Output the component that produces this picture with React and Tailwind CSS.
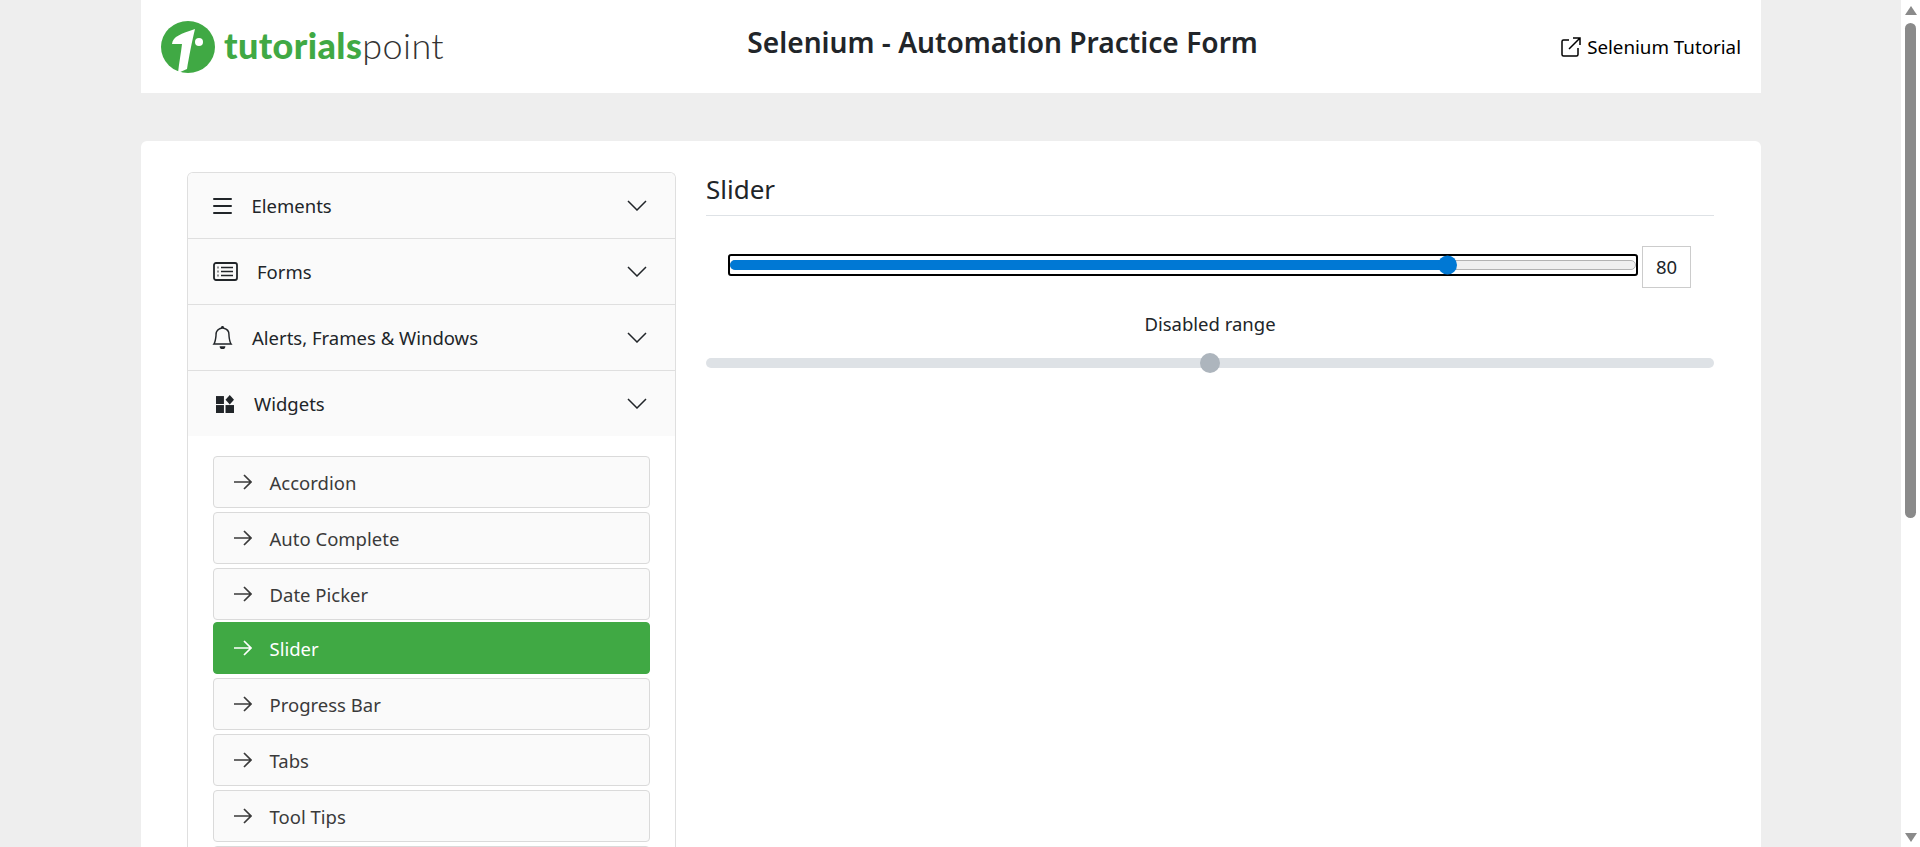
import React from "react";

const font = "font-['Noto_Sans','Open_Sans',sans-serif]";

function Logo() {
  return (
    <div className="flex items-center gap-[9px]">
      <svg width="54" height="52" viewBox="0 0 54 52" className="shrink-0">
        <ellipse cx="27" cy="26" rx="27" ry="26" fill="#40a944" />
        <path d="M11 23 C12 15 20 13 34 8 C31 20 28 36 26 48 C23 49 20 51 17 52 C18 42 20 32 21 23 Z" fill="#fff" />
        <circle cx="38" cy="21" r="4" fill="#fff" />
      </svg>
      <div className="flex items-baseline text-[36px] leading-none tracking-[0.4px] font-['Lato',sans-serif] mb-[4px]">
        <span className="font-black text-[#40a944]">tutorials</span>
        <span className="font-light text-[#333]">point</span>
      </div>
    </div>
  );
}

function MenuIcon() {
  return (
    <svg width="19" height="18" viewBox="0 0 19 18" fill="none" stroke="currentColor" strokeWidth="2" strokeLinecap="round" className="shrink-0">
      <path d="M1 2H18M1 9H18M1 16H18" />
    </svg>
  );
}

function ListIcon() {
  return (
    <svg width="25" height="19" viewBox="0 0 25 19" fill="none" stroke="currentColor" className="shrink-0">
      <rect x="1" y="1" width="23" height="17" rx="2" strokeWidth="1.8" />
      <path d="M8 5.500H20M8 9.500H20M8 13.500H20" strokeWidth="1.600" />
      <path d="M4.500 5.500H5.500M4.500 9.500H5.500M4.500 13.500H5.500" strokeWidth="1.800" />
    </svg>
  );
}

function BellIcon() {
  return (
    <svg width="23" height="23" viewBox="0 0 16 16" fill="currentColor" className="shrink-0 -ml-[2px]">
      <path d="M8 16a2 2 0 0 0 2-2H6a2 2 0 0 0 2 2zM8 1.918l-.797.161A4.002 4.002 0 0 0 4 6c0 .628-.134 2.197-.459 3.742-.16.767-.376 1.566-.663 2.258h10.244c-.287-.692-.502-1.49-.663-2.258C12.134 8.197 12 6.628 12 6a4.002 4.002 0 0 0-3.203-3.92L8 1.917zM14.22 12c.223.447.481.801.78 1H1c.299-.199.557-.553.78-1C2.68 10.2 3 6.88 3 6c0-2.42 1.720-4.440 4.005-4.901a1 1 0 1 1 1.990 0A5.002 5.002 0 0 1 13 6c0 .88.32 4.200 1.220 6z" />
    </svg>
  );
}

function WidgetsIcon() {
  return (
    <svg width="18" height="18" viewBox="0 0 17 17" fill="currentColor" className="shrink-0 ml-[3px]">
      <rect x="0" y="1" width="7.500" height="7.500" />
      <path d="M13 0 L17 4.500 L13 9 L9 4.500 Z" />
      <rect x="0" y="9.500" width="7.500" height="7.500" />
      <rect x="9" y="9.500" width="8" height="7.500" />
    </svg>
  );
}

function Chevron() {
  return (
    <svg width="20" height="11" viewBox="0 0 20 11" fill="none" stroke="currentColor" strokeWidth="1.500" className="shrink-0 text-[#212529]">
      <path d="M1 1L10 10L19 1" />
    </svg>
  );
}

function Arrow() {
  return (
    <svg width="18" height="16" viewBox="0 0 18 16" fill="none" stroke="currentColor" strokeWidth="1.700" className="shrink-0">
      <path d="M0 8H17M10 1L17 8L10 15" />
    </svg>
  );
}

function AccHeader({ icon, label, textLeft, last }) {
  return (
    <div className={`shrink-0 flex items-center pl-[25px] pr-[28px] bg-[#fafafa] text-[#212529] ${last ? "h-[65px]" : "h-[66px] border-b border-[#dfdfdf]"}`}>
      <span className="w-[20px] shrink-0 flex items-center overflow-visible">{icon}</span>
      <span className={`${textLeft} text-[18.5px] flex-1 pt-[1px]`}>{label}</span>
      <Chevron />
    </div>
  );
}

function Item({ label, active }) {
  return (
    <div
      className={`h-[52px] shrink-0 flex items-center pl-[20px] rounded-[4px] border text-[18.5px] ${
        active
          ? "bg-[#40a944] border-[#40a944] text-white -mt-[2px]"
          : "bg-[#fafafa] border-[#dadada] text-[#3a3a3a]"
      }`}
    >
      {label ? <Arrow /> : null}
      {label ? <span className="ml-[17.5px] pt-[1px]">{label}</span> : null}
    </div>
  );
}

export default function App() {
  return (
    <div className={`h-[847px] w-full overflow-hidden flex bg-[#eeeeee] text-[#212529] ${font}`}>
      <div className="flex-1 min-w-0 pl-[141px] pr-[140px] flex flex-col h-[847px] overflow-hidden">
        <header className="h-[93px] shrink-0 bg-white flex items-center pl-[20px] pr-[20px] justify-between">
          <div className="w-[300px]"><Logo /></div>
          <h1 className="text-[28.15px] font-semibold leading-none -mt-[9px] -ml-[17px]">Selenium - Automation Practice Form</h1>
          <div className="flex items-center gap-[6px] text-[18.75px] text-black mt-[1px]">
            <svg width="20" height="20" viewBox="0 0 20 20" fill="none" stroke="currentColor" strokeWidth="1.500" className="shrink-0">
              <path d="M8 3H2.500A1.500 1.500 0 0 0 1 4.500v13A1.500 1.500 0 0 0 2.500 19h13a1.500 1.500 0 0 0 1.500-1.500V11" />
              <path d="M8 12L19 1M12 1H19V8" />
            </svg>
            <span>Selenium Tutorial</span>
          </div>
        </header>
        <main className="mt-[48px] flex-1 bg-white rounded-t-[6px] flex pl-[46px] pr-[47px] pt-[31px] gap-[30px] min-h-0">
          <aside className="w-[489px] shrink-0 border border-b-0 border-[#dfdfdf] rounded-t-[6px] flex flex-col overflow-hidden">
            <AccHeader icon={<MenuIcon />} label="Elements" textLeft="ml-[18.5px]" />
            <AccHeader icon={<ListIcon />} label="Forms" textLeft="ml-[24px]" />
            <AccHeader icon={<BellIcon />} label="Alerts, Frames & Windows" textLeft="ml-[19px]" />
            <AccHeader icon={<WidgetsIcon />} label="Widgets" textLeft="ml-[21px]" last />
            <div className="pt-[20px] px-[25px] flex flex-col gap-[4px]">
              <Item label="Accordion" />
              <Item label="Auto Complete" />
              <Item label="Date Picker" />
              <Item label="Slider" active />
              <Item label="Progress Bar" />
              <Item label="Tabs" />
              <Item label="Tool Tips" />
              <Item />
            </div>
          </aside>
          <section className="flex-1 min-w-0">
            <h2 className="h-[45px] text-[26px] leading-[36px] border-b border-[#dee2e6] -mt-[1px]">Slider</h2>
            <div className="mt-[30px] flex items-center pl-[22px] pr-[23px] gap-[4px]">
              <div className="flex-1 h-[22px] mb-[4px] border-2 border-black rounded-[3px] flex items-center">
                <div className="relative flex-1 h-[10px] rounded-full bg-[#efefef] border border-[#b2b2b2]">
                  <div className="absolute -left-px -top-px -bottom-px w-[79.2%] rounded-full bg-[#0078d4]" />
                  <div className="absolute left-[78.2%] top-1/2 -translate-y-1/2 w-[19px] h-[19px] rounded-full bg-[#0078d4]" />
                </div>
              </div>
              <div className="w-[49px] h-[42px] border border-[#cccccc] flex items-center justify-center text-[18.5px]">80</div>
            </div>
            <div className="mt-[22px] text-center text-[18.5px] leading-[27px]">Disabled range</div>
            <div className="relative mt-[21px] h-[10px] rounded-full bg-[#dee2e6]">
              <div className="absolute left-1/2 top-1/2 -translate-x-1/2 -translate-y-1/2 w-[20px] h-[20px] rounded-full bg-[#adb5bd]" />
            </div>
          </section>
        </main>
      </div>
      <div className="w-[19px] shrink-0 bg-white flex flex-col items-center">
        <div className="mt-[6px] w-0 h-0 border-l-[6.5px] border-r-[6.5px] border-b-[9px] border-l-transparent border-r-transparent border-b-[#8a8a8a]" />
        <div className="mt-[8px] w-[11px] h-[495px] rounded-full bg-[#8a8a8a]" />
        <div className="mt-auto mb-[5px] w-0 h-0 border-l-[6.5px] border-r-[6.5px] border-t-[9px] border-l-transparent border-r-transparent border-t-[#8a8a8a]" />
      </div>
    </div>
  );
}
